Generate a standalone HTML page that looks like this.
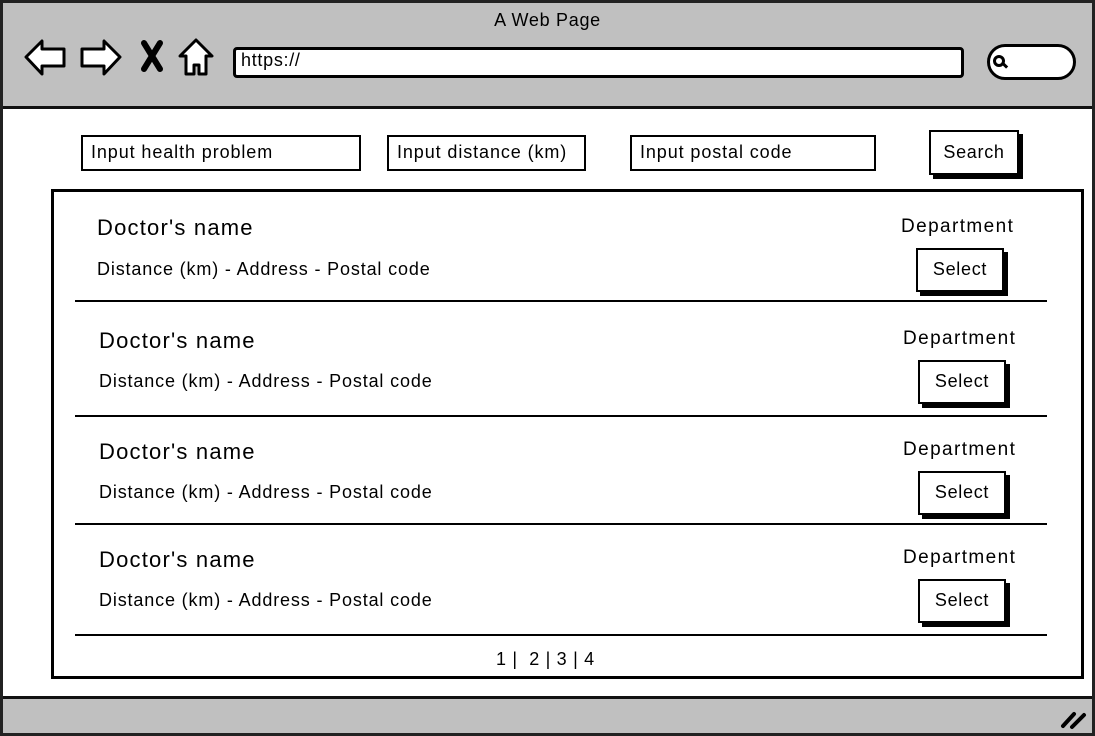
<!DOCTYPE html>
<html><head><meta charset="utf-8"><style>
body{margin:0;width:1095px;height:736px;position:relative;background:#fff;font-family:"Liberation Sans",sans-serif;color:#000;overflow:hidden}
div{position:absolute;box-sizing:border-box}
.t{white-space:nowrap;letter-spacing:0.7px}
.box{border:2.5px solid #000;background:#fff;border-radius:2px}
.inp{border:2.5px solid #000;background:#fff;font-size:18px;line-height:30px;padding-left:8px;height:36px;letter-spacing:0.9px}
.btn{border:2.5px solid #000;background:#fff;box-shadow:4px 4px 0 #000;font-size:18px;text-align:center}
.name{font-size:22px;letter-spacing:1.2px}
.addr{font-size:18px;letter-spacing:0.85px}
.dep{font-size:19px;letter-spacing:1.4px}
.hr{height:2px;background:#000;left:75px;width:972px}
</style></head><body>
<div style="left:0;top:0;width:1095px;height:736px;border:3px solid #222;background:#fff"></div>
<div style="left:3px;top:3px;width:1089px;height:106px;background:#c0c0c0;border-bottom:3px solid #111"></div>
<div style="left:3px;top:696px;width:1089px;height:37px;background:#c0c0c0;border-top:3px solid #111"></div>
<div class="t" style="left:0;width:1095px;top:10px;text-align:center;font-size:18px">A Web Page</div>
<svg style="position:absolute;left:20px;top:34px" width="200" height="46" viewBox="0 0 200 46">
<g fill="#fff" stroke="#000" stroke-width="3" stroke-linejoin="round">
<path d="M6 23 L22 7 L22 15 L44 15 L44 32 L22 32 L22 40 Z"/>
<path d="M100 23 L84 7 L84 15 L62 15 L62 32 L84 32 L84 40 Z"/>
<path d="M176 6 L192 22 L186 22 L186 40 L179 40 L179 31 L174 31 L174 40 L166 40 L166 22 L160 22 Z"/>
</g>
<path d="M124 9 L140 35 M140 9 L124 35" stroke="#000" stroke-width="6" stroke-linecap="round"/>
</svg>
<div class="box" style="left:233px;top:47px;width:731px;height:31px;border-width:3px;border-radius:4px"></div>
<div class="t" style="left:241px;top:50px;font-size:18px">https://</div>
<div style="left:987px;top:44px;width:89px;height:36px;border:3px solid #000;border-radius:18px;background:#fff"></div>
<div style="left:993px;top:55px;width:12px;height:12px;border:3px solid #000;border-radius:50%"></div>
<div style="left:1002px;top:64px;width:6px;height:3px;background:#000;transform:rotate(45deg)"></div>
<div class="inp t" style="left:81px;top:135px;width:280px">Input health problem</div>
<div class="inp t" style="left:387px;top:135px;width:199px">Input distance (km)</div>
<div class="inp t" style="left:630px;top:135px;width:246px">Input postal code</div>
<div class="btn t" style="left:929px;top:130px;width:90px;height:45px;line-height:40px">Search</div>
<div style="left:51px;top:189px;width:1033px;height:490px;border:3px solid #000"></div>

<div class="t name" style="left:97px;top:215px">Doctor's name</div>
<div class="t addr" style="left:97px;top:259px">Distance (km) - Address - Postal code</div>
<div class="t dep" style="left:901px;top:216px">Department</div>
<div class="btn t" style="left:916px;top:248px;width:88px;height:44px;line-height:39px">Select</div>
<div class="hr" style="top:300px"></div>

<div class="t name" style="left:99px;top:328px">Doctor's name</div>
<div class="t addr" style="left:99px;top:371px">Distance (km) - Address - Postal code</div>
<div class="t dep" style="left:903px;top:328px">Department</div>
<div class="btn t" style="left:918px;top:360px;width:88px;height:44px;line-height:39px">Select</div>
<div class="hr" style="top:415px"></div>

<div class="t name" style="left:99px;top:439px">Doctor's name</div>
<div class="t addr" style="left:99px;top:482px">Distance (km) - Address - Postal code</div>
<div class="t dep" style="left:903px;top:439px">Department</div>
<div class="btn t" style="left:918px;top:471px;width:88px;height:44px;line-height:39px">Select</div>
<div class="hr" style="top:523px"></div>

<div class="t name" style="left:99px;top:547px">Doctor's name</div>
<div class="t addr" style="left:99px;top:590px">Distance (km) - Address - Postal code</div>
<div class="t dep" style="left:903px;top:547px">Department</div>
<div class="btn t" style="left:918px;top:579px;width:88px;height:44px;line-height:39px">Select</div>
<div class="hr" style="top:634px"></div>

<div class="t" style="left:496px;top:649px;font-size:18px">1 |&nbsp; 2 | 3 | 4</div>
<svg style="position:absolute;left:1060px;top:708px" width="28" height="22"><path d="M3 18 L14 6 M12 19 L24 7" stroke="#000" stroke-width="4" stroke-linecap="round"/></svg>
</body></html>
